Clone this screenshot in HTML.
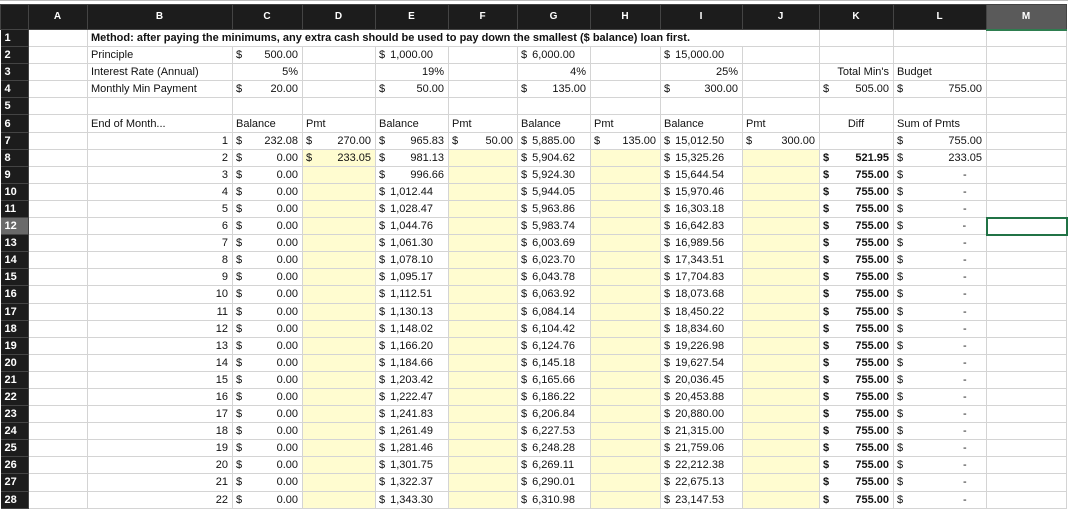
<!DOCTYPE html>
<html><head><meta charset="utf-8"><style>
body{margin:0;width:1068px;height:508px;overflow:hidden;background:#fff;font-family:"Liberation Sans",sans-serif;font-size:11px;color:#111}
.top{position:absolute;left:0;top:0;width:1068px;height:2px;border-top:1px solid #bbb}
table{position:absolute;left:0;top:4px;border-collapse:collapse;table-layout:fixed;width:1066px}
tr{height:17.1px}
td{border:1px solid #d4d4d4;padding:0 4px 0 3px;white-space:nowrap;overflow:hidden;line-height:14px}
tr.h{height:25px}
tr.h td{background:#1c1c1c;color:#fff;font-weight:bold;text-align:center;border:1px solid #444;font-size:10px}
tr.h td.m{background:#5a5a5a;border-bottom:2px solid #2e7d4f}
td.n{background:#1c1c1c;color:#fff;font-weight:bold;border:1px solid #444;border-left:none;padding-left:4px}
td.n.s{background:#6a6a6a}
td.r{text-align:right}
td.c{text-align:center}
td.y{background:#fffcd0}
.d{float:left}
td.a{text-align:right}
td.g{text-align:left}
td.g .d{float:none;margin-right:5px}
td.bb{font-weight:bold}
td.sel{border:2px solid #217346}
</style></head><body>
<div class="top"></div>
<table>
<colgroup><col style="width:28px"><col style="width:59px"><col style="width:145px"><col style="width:70px"><col style="width:73px"><col style="width:73px"><col style="width:69px"><col style="width:73px"><col style="width:70px"><col style="width:82px"><col style="width:77px"><col style="width:74px"><col style="width:93px"><col style="width:80px"></colgroup>
<tr class="h"><td></td><td>A</td><td>B</td><td>C</td><td>D</td><td>E</td><td>F</td><td>G</td><td>H</td><td>I</td><td>J</td><td>K</td><td>L</td><td class="m">M</td></tr>
<tr><td class="n">1</td><td></td><td colspan="9" style="font-weight:bold">Method: after paying the minimums, any extra cash should be used to pay down the smallest ($ balance) loan first.</td><td></td><td></td><td></td></tr>
<tr><td class="n">2</td><td></td><td>Principle</td><td class="a"><span class="d">$</span>500.00</td><td></td><td class="g"><span class="d">$</span>1,000.00</td><td></td><td class="g"><span class="d">$</span>6,000.00</td><td></td><td class="g"><span class="d">$</span>15,000.00</td><td></td><td></td><td></td><td></td></tr>
<tr><td class="n">3</td><td></td><td>Interest Rate (Annual)</td><td class="r">5%</td><td></td><td class="r">19%</td><td></td><td class="r">4%</td><td></td><td class="r">25%</td><td></td><td class="r">Total Min's</td><td>Budget</td><td></td></tr>
<tr><td class="n">4</td><td></td><td>Monthly Min Payment</td><td class="a"><span class="d">$</span>20.00</td><td></td><td class="a"><span class="d">$</span>50.00</td><td></td><td class="a"><span class="d">$</span>135.00</td><td></td><td class="a"><span class="d">$</span>300.00</td><td></td><td class="a"><span class="d">$</span>505.00</td><td class="a"><span class="d">$</span>755.00</td><td></td></tr>
<tr><td class="n">5</td><td></td><td></td><td></td><td></td><td></td><td></td><td></td><td></td><td></td><td></td><td></td><td></td><td></td></tr>
<tr><td class="n">6</td><td></td><td>End of Month...</td><td>Balance</td><td>Pmt</td><td>Balance</td><td>Pmt</td><td>Balance</td><td>Pmt</td><td>Balance</td><td>Pmt</td><td class="c">Diff</td><td>Sum of Pmts</td><td></td></tr>
<tr><td class="n">7</td><td></td><td class="r">1</td><td class="a"><span class="d">$</span>232.08</td><td class="a"><span class="d">$</span>270.00</td><td class="a"><span class="d">$</span>965.83</td><td class="a"><span class="d">$</span>50.00</td><td class="g"><span class="d">$</span>5,885.00</td><td class="a"><span class="d">$</span>135.00</td><td class="g"><span class="d">$</span>15,012.50</td><td class="a"><span class="d">$</span>300.00</td><td></td><td class="a"><span class="d">$</span>755.00</td><td></td></tr>
<tr><td class="n">8</td><td></td><td class="r">2</td><td class="a"><span class="d">$</span>0.00</td><td class="a y"><span class="d">$</span>233.05</td><td class="a"><span class="d">$</span>981.13</td><td class="y"></td><td class="g"><span class="d">$</span>5,904.62</td><td class="y"></td><td class="g"><span class="d">$</span>15,325.26</td><td class="y"></td><td class="a bb"><span class="d">$</span>521.95</td><td class="a"><span class="d">$</span>233.05</td><td></td></tr>
<tr><td class="n">9</td><td></td><td class="r">3</td><td class="a"><span class="d">$</span>0.00</td><td class="y"></td><td class="a"><span class="d">$</span>996.66</td><td class="y"></td><td class="g"><span class="d">$</span>5,924.30</td><td class="y"></td><td class="g"><span class="d">$</span>15,644.54</td><td class="y"></td><td class="a bb"><span class="d">$</span>755.00</td><td class="a"><span class="d">$</span>-&nbsp;&nbsp;&nbsp;&nbsp;&nbsp;</td><td></td></tr>
<tr><td class="n">10</td><td></td><td class="r">4</td><td class="a"><span class="d">$</span>0.00</td><td class="y"></td><td class="g"><span class="d">$</span>1,012.44</td><td class="y"></td><td class="g"><span class="d">$</span>5,944.05</td><td class="y"></td><td class="g"><span class="d">$</span>15,970.46</td><td class="y"></td><td class="a bb"><span class="d">$</span>755.00</td><td class="a"><span class="d">$</span>-&nbsp;&nbsp;&nbsp;&nbsp;&nbsp;</td><td></td></tr>
<tr><td class="n">11</td><td></td><td class="r">5</td><td class="a"><span class="d">$</span>0.00</td><td class="y"></td><td class="g"><span class="d">$</span>1,028.47</td><td class="y"></td><td class="g"><span class="d">$</span>5,963.86</td><td class="y"></td><td class="g"><span class="d">$</span>16,303.18</td><td class="y"></td><td class="a bb"><span class="d">$</span>755.00</td><td class="a"><span class="d">$</span>-&nbsp;&nbsp;&nbsp;&nbsp;&nbsp;</td><td></td></tr>
<tr><td class="n s">12</td><td></td><td class="r">6</td><td class="a"><span class="d">$</span>0.00</td><td class="y"></td><td class="g"><span class="d">$</span>1,044.76</td><td class="y"></td><td class="g"><span class="d">$</span>5,983.74</td><td class="y"></td><td class="g"><span class="d">$</span>16,642.83</td><td class="y"></td><td class="a bb"><span class="d">$</span>755.00</td><td class="a"><span class="d">$</span>-&nbsp;&nbsp;&nbsp;&nbsp;&nbsp;</td><td class="sel"></td></tr>
<tr><td class="n">13</td><td></td><td class="r">7</td><td class="a"><span class="d">$</span>0.00</td><td class="y"></td><td class="g"><span class="d">$</span>1,061.30</td><td class="y"></td><td class="g"><span class="d">$</span>6,003.69</td><td class="y"></td><td class="g"><span class="d">$</span>16,989.56</td><td class="y"></td><td class="a bb"><span class="d">$</span>755.00</td><td class="a"><span class="d">$</span>-&nbsp;&nbsp;&nbsp;&nbsp;&nbsp;</td><td></td></tr>
<tr><td class="n">14</td><td></td><td class="r">8</td><td class="a"><span class="d">$</span>0.00</td><td class="y"></td><td class="g"><span class="d">$</span>1,078.10</td><td class="y"></td><td class="g"><span class="d">$</span>6,023.70</td><td class="y"></td><td class="g"><span class="d">$</span>17,343.51</td><td class="y"></td><td class="a bb"><span class="d">$</span>755.00</td><td class="a"><span class="d">$</span>-&nbsp;&nbsp;&nbsp;&nbsp;&nbsp;</td><td></td></tr>
<tr><td class="n">15</td><td></td><td class="r">9</td><td class="a"><span class="d">$</span>0.00</td><td class="y"></td><td class="g"><span class="d">$</span>1,095.17</td><td class="y"></td><td class="g"><span class="d">$</span>6,043.78</td><td class="y"></td><td class="g"><span class="d">$</span>17,704.83</td><td class="y"></td><td class="a bb"><span class="d">$</span>755.00</td><td class="a"><span class="d">$</span>-&nbsp;&nbsp;&nbsp;&nbsp;&nbsp;</td><td></td></tr>
<tr><td class="n">16</td><td></td><td class="r">10</td><td class="a"><span class="d">$</span>0.00</td><td class="y"></td><td class="g"><span class="d">$</span>1,112.51</td><td class="y"></td><td class="g"><span class="d">$</span>6,063.92</td><td class="y"></td><td class="g"><span class="d">$</span>18,073.68</td><td class="y"></td><td class="a bb"><span class="d">$</span>755.00</td><td class="a"><span class="d">$</span>-&nbsp;&nbsp;&nbsp;&nbsp;&nbsp;</td><td></td></tr>
<tr><td class="n">17</td><td></td><td class="r">11</td><td class="a"><span class="d">$</span>0.00</td><td class="y"></td><td class="g"><span class="d">$</span>1,130.13</td><td class="y"></td><td class="g"><span class="d">$</span>6,084.14</td><td class="y"></td><td class="g"><span class="d">$</span>18,450.22</td><td class="y"></td><td class="a bb"><span class="d">$</span>755.00</td><td class="a"><span class="d">$</span>-&nbsp;&nbsp;&nbsp;&nbsp;&nbsp;</td><td></td></tr>
<tr><td class="n">18</td><td></td><td class="r">12</td><td class="a"><span class="d">$</span>0.00</td><td class="y"></td><td class="g"><span class="d">$</span>1,148.02</td><td class="y"></td><td class="g"><span class="d">$</span>6,104.42</td><td class="y"></td><td class="g"><span class="d">$</span>18,834.60</td><td class="y"></td><td class="a bb"><span class="d">$</span>755.00</td><td class="a"><span class="d">$</span>-&nbsp;&nbsp;&nbsp;&nbsp;&nbsp;</td><td></td></tr>
<tr><td class="n">19</td><td></td><td class="r">13</td><td class="a"><span class="d">$</span>0.00</td><td class="y"></td><td class="g"><span class="d">$</span>1,166.20</td><td class="y"></td><td class="g"><span class="d">$</span>6,124.76</td><td class="y"></td><td class="g"><span class="d">$</span>19,226.98</td><td class="y"></td><td class="a bb"><span class="d">$</span>755.00</td><td class="a"><span class="d">$</span>-&nbsp;&nbsp;&nbsp;&nbsp;&nbsp;</td><td></td></tr>
<tr><td class="n">20</td><td></td><td class="r">14</td><td class="a"><span class="d">$</span>0.00</td><td class="y"></td><td class="g"><span class="d">$</span>1,184.66</td><td class="y"></td><td class="g"><span class="d">$</span>6,145.18</td><td class="y"></td><td class="g"><span class="d">$</span>19,627.54</td><td class="y"></td><td class="a bb"><span class="d">$</span>755.00</td><td class="a"><span class="d">$</span>-&nbsp;&nbsp;&nbsp;&nbsp;&nbsp;</td><td></td></tr>
<tr><td class="n">21</td><td></td><td class="r">15</td><td class="a"><span class="d">$</span>0.00</td><td class="y"></td><td class="g"><span class="d">$</span>1,203.42</td><td class="y"></td><td class="g"><span class="d">$</span>6,165.66</td><td class="y"></td><td class="g"><span class="d">$</span>20,036.45</td><td class="y"></td><td class="a bb"><span class="d">$</span>755.00</td><td class="a"><span class="d">$</span>-&nbsp;&nbsp;&nbsp;&nbsp;&nbsp;</td><td></td></tr>
<tr><td class="n">22</td><td></td><td class="r">16</td><td class="a"><span class="d">$</span>0.00</td><td class="y"></td><td class="g"><span class="d">$</span>1,222.47</td><td class="y"></td><td class="g"><span class="d">$</span>6,186.22</td><td class="y"></td><td class="g"><span class="d">$</span>20,453.88</td><td class="y"></td><td class="a bb"><span class="d">$</span>755.00</td><td class="a"><span class="d">$</span>-&nbsp;&nbsp;&nbsp;&nbsp;&nbsp;</td><td></td></tr>
<tr><td class="n">23</td><td></td><td class="r">17</td><td class="a"><span class="d">$</span>0.00</td><td class="y"></td><td class="g"><span class="d">$</span>1,241.83</td><td class="y"></td><td class="g"><span class="d">$</span>6,206.84</td><td class="y"></td><td class="g"><span class="d">$</span>20,880.00</td><td class="y"></td><td class="a bb"><span class="d">$</span>755.00</td><td class="a"><span class="d">$</span>-&nbsp;&nbsp;&nbsp;&nbsp;&nbsp;</td><td></td></tr>
<tr><td class="n">24</td><td></td><td class="r">18</td><td class="a"><span class="d">$</span>0.00</td><td class="y"></td><td class="g"><span class="d">$</span>1,261.49</td><td class="y"></td><td class="g"><span class="d">$</span>6,227.53</td><td class="y"></td><td class="g"><span class="d">$</span>21,315.00</td><td class="y"></td><td class="a bb"><span class="d">$</span>755.00</td><td class="a"><span class="d">$</span>-&nbsp;&nbsp;&nbsp;&nbsp;&nbsp;</td><td></td></tr>
<tr><td class="n">25</td><td></td><td class="r">19</td><td class="a"><span class="d">$</span>0.00</td><td class="y"></td><td class="g"><span class="d">$</span>1,281.46</td><td class="y"></td><td class="g"><span class="d">$</span>6,248.28</td><td class="y"></td><td class="g"><span class="d">$</span>21,759.06</td><td class="y"></td><td class="a bb"><span class="d">$</span>755.00</td><td class="a"><span class="d">$</span>-&nbsp;&nbsp;&nbsp;&nbsp;&nbsp;</td><td></td></tr>
<tr><td class="n">26</td><td></td><td class="r">20</td><td class="a"><span class="d">$</span>0.00</td><td class="y"></td><td class="g"><span class="d">$</span>1,301.75</td><td class="y"></td><td class="g"><span class="d">$</span>6,269.11</td><td class="y"></td><td class="g"><span class="d">$</span>22,212.38</td><td class="y"></td><td class="a bb"><span class="d">$</span>755.00</td><td class="a"><span class="d">$</span>-&nbsp;&nbsp;&nbsp;&nbsp;&nbsp;</td><td></td></tr>
<tr><td class="n">27</td><td></td><td class="r">21</td><td class="a"><span class="d">$</span>0.00</td><td class="y"></td><td class="g"><span class="d">$</span>1,322.37</td><td class="y"></td><td class="g"><span class="d">$</span>6,290.01</td><td class="y"></td><td class="g"><span class="d">$</span>22,675.13</td><td class="y"></td><td class="a bb"><span class="d">$</span>755.00</td><td class="a"><span class="d">$</span>-&nbsp;&nbsp;&nbsp;&nbsp;&nbsp;</td><td></td></tr>
<tr><td class="n">28</td><td></td><td class="r">22</td><td class="a"><span class="d">$</span>0.00</td><td class="y"></td><td class="g"><span class="d">$</span>1,343.30</td><td class="y"></td><td class="g"><span class="d">$</span>6,310.98</td><td class="y"></td><td class="g"><span class="d">$</span>23,147.53</td><td class="y"></td><td class="a bb"><span class="d">$</span>755.00</td><td class="a"><span class="d">$</span>-&nbsp;&nbsp;&nbsp;&nbsp;&nbsp;</td><td></td></tr>
</table>
</body></html>
